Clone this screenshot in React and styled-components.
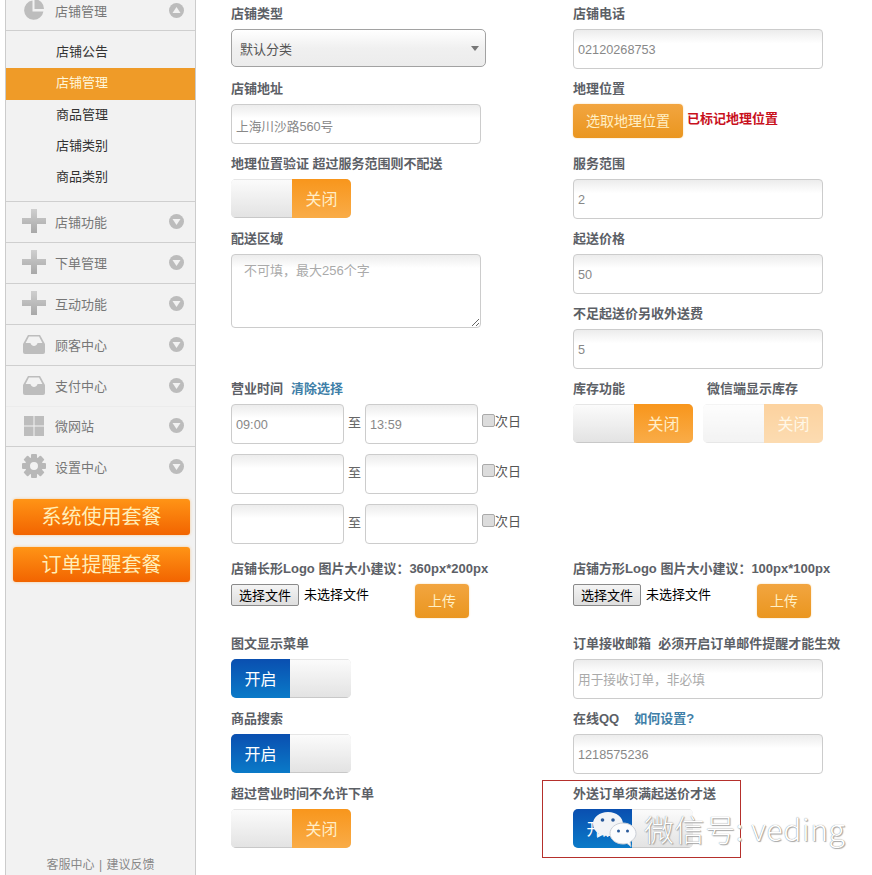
import React from 'react'
import styled, { createGlobalStyle } from 'styled-components'

const GlobalStyle = createGlobalStyle`
  html, body {
    margin: 0;
    height: 875px;
    overflow: hidden;
    background: #fff;
    font-family: "Liberation Sans", "Noto Sans CJK SC", sans-serif;
  }
  * { box-sizing: border-box; }
`

const Page = styled.div`
  position: relative;
  display: flex;
  width: 872px;
  height: 875px;
  padding-left: 5px;
  overflow: hidden;
`

/* sidebar */
const Sidebar = styled.aside`
  width: 191px;
  height: 875px;
  display: flex;
  flex-direction: column;
  flex-shrink: 0;
  background: #f2f2f2;
  border-left: 1px solid #ccc;
  border-right: 1px solid #ccc;
`
const NavHead = styled.div`
  display: flex;
  align-items: center;
  height: ${(p) => p.$h || 41}px;
  padding: ${(p) => (p.$first ? '0 0 10px 16px' : '0 0 2px 16px')};
  border-bottom: 1px solid ${(p) => (p.$last ? 'transparent' : p.$faint ? '#ececec' : '#cfcfcf')};
  color: #777;
  font-size: 13px;
`
const NavIcon = styled.span`
  width: 24px;
  height: 24px;
  display: flex;
  align-items: center;
  justify-content: center;
  margin-right: 9px;
`
const NavLabel = styled.span`
  flex: 1;
`
const Arrow = styled.svg`
  width: 15px;
  height: 15px;
  margin-right: 11px;
`
const SubList = styled.div`
  height: 171px;
  padding-top: 6px;
  border-bottom: 1px solid #cfcfcf;
`
const SubItem = styled.div`
  height: 31.3px;
  line-height: 29px;
  padding-left: 50px;
  font-size: 13px;
  color: ${(p) => (p.$active ? '#fff6d8' : '#333')};
  background: ${(p) => (p.$active ? '#ef9b28' : 'transparent')};
`
const PlanButton = styled.div`
  width: 177px;
  height: ${(p) => p.$h}px;
  margin: ${(p) => p.$mt}px 0 0 7px;
  padding-bottom: 3px;
  display: flex;
  align-items: center;
  justify-content: center;
  border-radius: 3px;
  background: linear-gradient(#ff9416, #f26400);
  box-shadow: 0 0 3px #f8c890;
  color: #ffeeb8;
  font-size: 20px;
`
const SideFooter = styled.div`
  margin-top: auto;
  padding-bottom: 1px;
  text-align: center;
  font-size: 12px;
  line-height: 17px;
  word-spacing: 1px;
  color: #888;
`

/* form */
const Main = styled.main`
  display: flex;
  padding: 4px 0 0 35px;
`
const Column = styled.div`
  width: ${(p) => p.$w}px;
`
const Field = styled.div`
  height: ${(p) => p.$h || 75}px;
`
const Label = styled.div`
  height: 25px;
  font-size: 13px;
  line-height: 19px;
  font-weight: 700;
  color: #5c6066;
`
const LabelLink = styled.a`
  margin-left: ${(p) => p.$ml}px;
  color: #3f7fa8;
`
const TextInput = styled.input`
  display: block;
  width: ${(p) => p.$w || 250}px;
  height: 40px;
  padding: 2px 4px 0;
  border: 1px solid #ccc;
  border-radius: 4px;
  outline: none;
  background: linear-gradient(#ececec, #fff 35%);
  font-family: inherit;
  font-size: 12.7px;
  color: #888;
  &::placeholder { color: #aaa; }
`
const Area = styled.textarea`
  display: block;
  width: 250px;
  height: 74px;
  padding: 7px 12px;
  border: 1px solid #ccc;
  border-radius: 4px;
  outline: none;
  background: linear-gradient(#ececec, #fff 18%);
  font-family: inherit;
  font-size: 13px;
  line-height: 18px;
  &::placeholder { color: #aaa; }
`
const SelectWrap = styled.div`
  position: relative;
  width: 255px;
  height: 38px;
  &::after {
    content: "";
    position: absolute;
    right: 7px;
    top: 17px;
    border: 4px solid transparent;
    border-top: 5px solid #777;
    border-bottom: 0;
  }
`
const Select = styled.select`
  width: 100%;
  height: 100%;
  padding: 2px 0 0 8px;
  appearance: none;
  border: 1px solid #a2a2a2;
  border-radius: 5px;
  outline: none;
  background: linear-gradient(#fff, #f0f0f0 50%, #ececec);
  font-family: inherit;
  font-size: 13px;
  color: #555;
`
const Row = styled.div`
  display: flex;
  align-items: flex-start;
`
const OrangeButton = styled.div`
  width: ${(p) => p.$w}px;
  height: 34px;
  padding-bottom: 2px;
  display: flex;
  align-items: center;
  justify-content: center;
  border-radius: 4px;
  background: linear-gradient(#f2a540, #ea961f);
  box-shadow: 0 0 2px #f6d6a0;
  color: #ffefc4;
  font-size: 14px;
`
const Marked = styled.span`
  margin: 6px 0 0 4px;
  font-size: 13px;
  line-height: 18px;
  font-weight: 700;
  color: #c8101c;
`
const SwitchBox = styled.div`
  display: flex;
  width: 120px;
  height: 39px;
  border-radius: 5px;
  overflow: hidden;
  opacity: ${(p) => (p.$disabled ? 0.42 : 1)};
  box-shadow: inset 0 0 0 1px #e0e0e0;
  margin-left: ${(p) => p.$ml || 0}px;
`
const SwitchBlank = styled.div`
  flex: 1;
  background: linear-gradient(#fbfbfb, #e3e3e3);
  border-top: 1px solid #e6e6e6;
  border-bottom: 1px solid #c8c8c8;
`
const SwitchFace = styled.div`
  width: 59px;
  padding-bottom: 2px;
  display: flex;
  align-items: center;
  justify-content: center;
  font-size: 16px;
  color: ${(p) => (p.$on ? '#fff' : '#ffeec8')};
  background: ${(p) => (p.$on
    ? 'linear-gradient(#0a4fb0, #0a7ac8)'
    : 'linear-gradient(#f8961c, #f9ac48)')};
`
const Switch = ({ on, disabled, ml }) => (
  <SwitchBox $disabled={disabled} $ml={ml}>
    {on && <SwitchFace $on>开启</SwitchFace>}
    <SwitchBlank />
    {!on && <SwitchFace>关闭</SwitchFace>}
  </SwitchBox>
)
const TimeRow = styled.div`
  display: flex;
  align-items: center;
  height: 40px;
  margin-bottom: 10px;
`
const To = styled.span`
  width: 21px;
  padding-bottom: 5px;
  text-align: center;
  font-size: 13px;
  color: #666;
`
const NextDay = styled.label`
  display: flex;
  align-items: center;
  margin: 0 0 8px 4px;
  font-size: 13px;
  color: #555;
`
const Check = styled.input`
  appearance: none;
  width: 13px;
  height: 13px;
  margin: 0;
  border: 1px solid #aaa;
  border-radius: 2px;
  background: #dcdcdc;
`
const FilePick = styled.div`
  display: flex;
  align-items: flex-start;
  width: 184px;
  font-size: 13px;
  color: #000;
`
const FileButton = styled.div`
  width: 68px;
  height: 22px;
  margin-right: 5px;
  padding-bottom: 2px;
  display: flex;
  align-items: center;
  justify-content: center;
  border: 1px solid #8a8a8a;
  border-radius: 2px;
  background: linear-gradient(#f4f4f4, #dedede);
`
const FileName = styled.span`
  line-height: 21px;
`

/* overlays on the screenshot */
const RedBox = styled.div`
  position: absolute;
  left: 542px;
  top: 780px;
  width: 199px;
  height: 78px;
  border: 1px solid #b5302c;
`
const Mark = styled.div`
  position: absolute;
  left: 590px;
  top: 808px;
  display: flex;
  align-items: center;
`
const MarkText = styled.span`
  margin-left: 6px;
  font-family: "Noto Sans CJK SC", "Noto Sans", sans-serif;
  font-size: 30px;
  line-height: 40px;
  font-weight: 300;
  letter-spacing: 0.6px;
  white-space: nowrap;
  color: #fff;
  text-shadow: 0 0 1px #777, 1px 1px 1px #aaa;
`

const Pie = () => (
  <svg width="22" height="22" viewBox="0 0 22 22">
    <path d="M9.5 1.5A9.7 9.7 0 1 0 20.4 12.5H9.5z" fill="#bdbdbd" />
    <path d="M11.5 0A10 10 0 0 1 21 10H11.5z" fill="#bdbdbd" />
  </svg>
)
const Plus = () => (
  <svg width="24" height="24" viewBox="0 0 24 24">
    <defs>
      <linearGradient id="plusFill" x1="0" y1="0" x2="0" y2="1">
        <stop offset="0" stopColor="#cfcfcf" />
        <stop offset="1" stopColor="#a8a8a8" />
      </linearGradient>
    </defs>
    <path d="M9 0h6v9h9v6h-9v9H9v-9H0V9h9z" fill="url(#plusFill)" />
  </svg>
)
const Tray = () => (
  <svg width="22" height="20" viewBox="0 0 22 20">
    <path d="M5 1h12l5 9v8a2 2 0 0 1-2 2H2a2 2 0 0 1-2-2v-8z" fill="#bdbdbd" />
    <path d="M6 2.6h10l3.4 6.4h-4.8c-1 2.2-2 3-3.600 3s-2.600-.8-3.600-3H2.600z" fill="#f2f2f2" />
  </svg>
)
const Tiles = () => (
  <svg width="20" height="20" viewBox="0 0 20 20" fill="#bdbdbd">
    <rect x="0" y="0" width="9.500" height="9.500" />
    <rect x="10.500" y="0" width="9.500" height="9.500" />
    <rect x="0" y="10.500" width="9.500" height="9.500" />
    <rect x="10.500" y="10.500" width="9.500" height="9.500" />
  </svg>
)
const Gear = () => (
  <svg width="24" height="24" viewBox="0 0 24 24">
    <g fill="#b8b8b8">
      {[0, 45, 90, 135, 180, 225, 270, 315].map((a) => (
        <rect key={a} x="9" y="0" width="6" height="6" rx="1" transform={`rotate(${a} 12 12)`} />
      ))}
    </g>
    <circle cx="12" cy="12" r="6.500" fill="none" stroke="#b8b8b8" strokeWidth="5" />
  </svg>
)
const ArrowIcon = ({ up }) => (
  <Arrow viewBox="0 0 15 15">
    <circle cx="7.500" cy="7.500" r="7.500" fill="#bcbcbc" />
    <path d={up ? 'M7.500 4l4 6h-8z' : 'M7.500 11l-4-6h8z'} fill="#f2f2f2" />
  </Arrow>
)
const WeChat = () => (
  <svg width="48" height="40" viewBox="0 0 48 40">
    <path d="M18 4C9.500 4 3 9.300 3 16c0 3.800 2 7 5.400 9.300L7 30l5.200-2.800c1.800.5 3.800.8 5.800.8 8.500 0 15-5.300 15-12S26.500 4 18 4z" fill="#f2f4f7" />
    <circle cx="12.500" cy="12" r="1.800" fill="#2a5a9a" />
    <circle cx="23" cy="12" r="1.800" fill="#2a5a9a" />
    <path d="M33 15c-7.200 0-13 4.700-13 10.500S25.800 36 33 36c1.400 0 2.800-.2 4-.6l4 3.100-1-4.600c3.500-1.900 6-4.900 6-8.400C46 19.700 40.200 15 33 15z" fill="#fbfcfd" stroke="#c9ced6" strokeWidth="1" />
    <circle cx="28.500" cy="23" r="1.500" fill="#2a5a9a" />
    <circle cx="37.500" cy="23" r="1.500" fill="#2a5a9a" />
  </svg>
)

const navItems = [
  { name: '店铺功能', icon: <Plus /> },
  { name: '下单管理', icon: <Plus /> },
  { name: '互动功能', icon: <Plus /> },
  { name: '顾客中心', icon: <Tray /> },
  { name: '支付中心', icon: <Tray /> },
  { name: '微网站', icon: <Tiles />, h: 40 },
  { name: '设置中心', icon: <Gear />, last: true },
]
const subItems = ['店铺公告', '店铺管理', '商品管理', '店铺类别', '商品类别']

const times = [['09:00', '13:59'], ['', ''], ['', '']]

export default function App() {
  return (
    <Page>
      <GlobalStyle />
      <Sidebar>
        <NavHead $h={31} $first>
          <NavIcon><Pie /></NavIcon>
          <NavLabel>店铺管理</NavLabel>
          <ArrowIcon up />
        </NavHead>
        <SubList>
          {subItems.map((s) => (
            <SubItem key={s} $active={s === '店铺管理'}>{s}</SubItem>
          ))}
        </SubList>
        {navItems.map((n) => (
          <NavHead key={n.name} $h={n.h} $last={n.last} $faint={n.name === '支付中心'}>
            <NavIcon>{n.icon}</NavIcon>
            <NavLabel>{n.name}</NavLabel>
            <ArrowIcon />
          </NavHead>
        ))}
        <PlanButton $h={36} $mt={11}>系统使用套餐</PlanButton>
        <PlanButton $h={35} $mt={12}>订单提醒套餐</PlanButton>
        <SideFooter>客服中心 | 建议反馈</SideFooter>
      </Sidebar>

      <Main>
        <Column $w={342}>
          <Field>
            <Label>店铺类型</Label>
            <SelectWrap>
              <Select defaultValue="默认分类"><option>默认分类</option></Select>
            </SelectWrap>
          </Field>
          <Field>
            <Label>店铺地址</Label>
            <TextInput readOnly value="上海川沙路560号" />
          </Field>
          <Field>
            <Label>地理位置验证 超过服务范围则不配送</Label>
            <Switch />
          </Field>
          <Field $h={150}>
            <Label>配送区域</Label>
            <Area placeholder="不可填，最大256个字" />
          </Field>
          <Field $h={180}>
            <Label>营业时间<LabelLink $ml={8}>清除选择</LabelLink></Label>
            {times.map((t, i) => (
              <TimeRow key={i}>
                <TextInput $w={113} readOnly value={t[0]} />
                <To>至</To>
                <TextInput $w={113} readOnly value={t[1]} />
                <NextDay><Check type="checkbox" />次日</NextDay>
              </TimeRow>
            ))}
          </Field>
          <Field>
            <Label>店铺长形Logo 图片大小建议：360px*200px</Label>
            <Row>
              <FilePick><FileButton>选择文件</FileButton><FileName>未选择文件</FileName></FilePick>
              <OrangeButton $w={54}>上传</OrangeButton>
            </Row>
          </Field>
          <Field>
            <Label>图文显示菜单</Label>
            <Switch on />
          </Field>
          <Field>
            <Label>商品搜索</Label>
            <Switch on />
          </Field>
          <Field>
            <Label>超过营业时间不允许下单</Label>
            <Switch />
          </Field>
        </Column>

        <Column $w={294}>
          <Field>
            <Label>店铺电话</Label>
            <TextInput readOnly value="02120268753" />
          </Field>
          <Field>
            <Label>地理位置</Label>
            <Row>
              <OrangeButton $w={110}>选取地理位置</OrangeButton>
              <Marked>已标记地理位置</Marked>
            </Row>
          </Field>
          <Field>
            <Label>服务范围</Label>
            <TextInput readOnly value="2" />
          </Field>
          <Field>
            <Label>起送价格</Label>
            <TextInput readOnly value="50" />
          </Field>
          <Field>
            <Label>不足起送价另收外送费</Label>
            <TextInput readOnly value="5" />
          </Field>
          <Field $h={180}>
            <Row>
              <Column $w={134}><Label>库存功能</Label><Switch /></Column>
              <Column $w={120}><Label>微信端显示库存</Label><Switch disabled ml={-4} /></Column>
            </Row>
          </Field>
          <Field>
            <Label>店铺方形Logo 图片大小建议：100px*100px</Label>
            <Row>
              <FilePick><FileButton>选择文件</FileButton><FileName>未选择文件</FileName></FilePick>
              <OrangeButton $w={54}>上传</OrangeButton>
            </Row>
          </Field>
          <Field>
            <Label>订单接收邮箱&nbsp;&nbsp;必须开启订单邮件提醒才能生效</Label>
            <TextInput placeholder="用于接收订单，非必填" />
          </Field>
          <Field>
            <Label>在线QQ<LabelLink $ml={15}>如何设置?</LabelLink></Label>
            <TextInput readOnly value="1218575236" />
          </Field>
          <Field>
            <Label>外送订单须满起送价才送</Label>
            <Switch on />
          </Field>
        </Column>
      </Main>

      <RedBox />
      <Mark>
        <WeChat />
        <MarkText>微信号: veding</MarkText>
      </Mark>
    </Page>
  )
}
